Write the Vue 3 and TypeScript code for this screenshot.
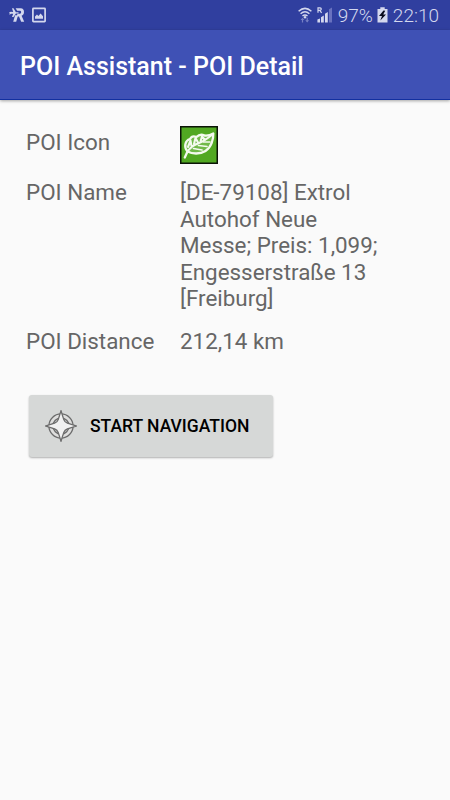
<script setup lang="ts">
interface Poi {
  name: string
  distance: string
}

const poi: Poi = {
  name: '[DE-79108] Extrol Autohof Neue Messe; Preis: 1,099; Engesserstraße 13 [Freiburg]',
  distance: '212,14 km',
}

function startNavigation(): void {
  window.dispatchEvent(new CustomEvent('start-navigation', { detail: poi }))
}
</script>

<template>
  <div class="screen">
    <div class="status-bar">
      <svg class="ic-route" width="16" height="16" viewBox="0 0 16 16">
        <path d="M6.6 1.2H11.6C14.2 1.2 15 3 15 5C15 7.1 13.9 8.4 12.6 8.8L15.2 14.8H12.2L10 9.4H8.7L7.2 14.8H4.2L6.1 8.2H8L8.5 6.8H11C12.5 6.8 12.5 3.8 11.2 3.8H8.2Z" />
        <path d="M0 5.4L1.8 4.8L4.2 5L3 1.2H4.5L6.9 5.2H9.5V6.6H6.9L4.5 10H3L4.2 6.8L1.8 6.8L.6 8V6.2Z" />
      </svg>
      <svg class="ic-image" width="14" height="16" viewBox="0 0 14 16">
        <rect x=".9" y="1.4" width="12.2" height="13.2" rx=".6" fill="none" stroke="#d4d8ee" stroke-width="1.7" />
        <path d="M3 11.8V9.4L5 7.5L6.4 9L8.6 6.6L11 9.2V11.8Z" />
      </svg>
      <div class="spacer"></div>
      <svg class="ic-wifi" width="14" height="17" viewBox="0 0 14 17">
        <g fill="none" stroke="#d4d8ee" stroke-width="1.5">
          <path d="M.6 4.2Q7-1.5 13.4 4.2" />
          <path d="M2.6 6.7Q7 2.8 11.4 6.7" />
          <path d="M4.5 9Q7 6.9 9.5 9" />
        </g>
        <circle cx="7" cy="10.3" r="1.2" />
        <g fill="#7780c5">
          <path d="M4.5 10.8L6.4 13H5.1V15.5H3.9V13H2.6Z" />
          <path d="M9.2 15.5L7.3 13.3H8.6V10.8H9.8V13.3H11.1Z" />
        </g>
      </svg>
      <svg class="ic-signal" width="16" height="16" viewBox="0 0 16 16">
        <path d="M1 5.8V.8H3Q4.3 1 4.3 2.1T3 3.3H1M2.8 3.3L4.6 5.8" fill="none" stroke="#d4d8ee" stroke-width="1.2" />
        <path d="M.4 12.4L3 11.4V15.4H.4ZM4 10.2L6.8 8.6V15.4H4ZM8 6.8L10.8 5V15.4H8Z" />
        <path d="M12 2.2L15 .4V15.4H12Z" fill="#6972bf" />
      </svg>
      <span class="battery-text">97%</span>
      <svg class="ic-battery" width="11" height="16" viewBox="0 0 11 16">
        <path d="M3.3 .3H7.7V2H10.5V15.6H.5V2H3.3Z" />
        <path d="M6.5 3.4L2 9H5L3.3 13.4L9 7.5H6.2L8.2 3.8Z" fill="#080a1c" />
      </svg>
      <span class="clock">22:10</span>
    </div>

    <header class="app-bar">
      <h1>POI Assistant - POI Detail</h1>
    </header>

    <main class="content">
      <dl class="details">
        <dt class="icon-label">POI Icon</dt>
        <dd class="icon-cell">
          <svg width="38" height="38" viewBox="0 0 38 38">
            <rect x=".75" y=".75" width="36.5" height="36.5" fill="#51a822" stroke="#0b1407" stroke-width="1.5" />
            <path d="M7.5 25.5C3.5 20 6 14 10.5 12L24.5 9.5L33 8C33 15 31 21 25.5 25C20 28.5 12 28 7.5 25.5Z" fill="#8dc76c" opacity=".55" />
            <g fill="none" stroke="#f4faef" stroke-linecap="round" stroke-linejoin="round">
              <path d="M4.8 31.5L7.5 25.5C3.5 21 5 14.5 10 13Q12 9 16.5 11Q20 7.5 24.5 9.5Q29 10 33.3 7.5C33.5 13 31.5 21 25.5 25C20 28.5 12 28 7.5 25.5" stroke-width="2.3" />
              <path d="M7.5 25.5Q12 19.5 18 17.5T33 8M8 21L10.5 14.5L11.5 20M14 18L15.5 12L18 16.5M20.5 15.5L22 10.5L25 14" stroke-width="2.1" />
              <path d="M13.5 22.5L22 24M18.5 19.5L27 20.5M23.5 16L30 16" stroke-width="1.7" />
            </g>
          </svg>
        </dd>
        <dt>POI Name</dt>
        <dd class="name-cell">{{ poi.name }}</dd>
        <dt>POI Distance</dt>
        <dd>{{ poi.distance }}</dd>
      </dl>

      <button class="nav-button" type="button" @click="startNavigation">
        <svg width="32" height="32" viewBox="0 0 32 32">
          <g fill="none">
            <circle cx="16" cy="16" r="10" stroke="#6c6c6c" stroke-width="5.4" />
            <circle cx="16" cy="16" r="10.1" stroke="#dededd" stroke-width="2.7" />
          </g>
          <path d="M16 .8L18.8 9.6Q19.7 12.3 22.4 13.2L31.2 16L22.4 18.8Q19.7 19.7 18.8 22.4L16 31.2L13.2 22.4Q12.3 19.7 9.6 18.8L.8 16L9.6 13.2Q12.3 12.3 13.2 9.6Z" fill="#f1f1f1" stroke="#6c6c6c" stroke-width="1.3" />
        </svg>
        <span>START NAVIGATION</span>
      </button>
    </main>
  </div>
</template>

<style>
body {
  margin: 0;
  background: #fafafa;
}
</style>

<style scoped>
.screen {
  width: 100%;
  height: 100vh;
  overflow: hidden;
  background: #fafafa;
  font-family: Roboto, "Noto Sans", sans-serif;
  display: flex;
  flex-direction: column;
}

.status-bar {
  flex: none;
  height: 30px;
  box-sizing: border-box;
  padding: 0 11px 0 9px;
  display: flex;
  align-items: center;
  background: #303f9f;
  color: #d4d8ee;
  font-size: 19px;
  line-height: 30px;
}

.status-bar svg {
  flex: none;
  fill: #d4d8ee;
}

.ic-image {
  margin-left: 7px;
}

.spacer {
  flex: 1;
}

.ic-signal {
  margin-left: 5px;
}

.battery-text {
  margin-left: 5px;
  padding-top: 2px;
  font-weight: 300;
}

.ic-battery {
  margin-left: 4px;
}

.clock {
  margin-left: 5px;
  padding-top: 2px;
  font-weight: 300;
}

.app-bar {
  flex: none;
  height: 70px;
  box-sizing: border-box;
  padding: 4px 20px 0;
  display: flex;
  align-items: center;
  background: #3f51b5;
  border-bottom: 1px solid #1230a0;
  box-shadow: 0 1px 3px rgba(0, 0, 0, 0.35);
}

h1 {
  margin: 0;
  color: #fff;
  font-size: 25px;
  font-weight: 500;
  line-height: 30px;
}

.content {
  padding: 26px 26px 0;
}

.details {
  margin: 0;
  display: grid;
  grid-template-columns: 154px 205px;
  row-gap: 16px;
  color: #666;
  font-size: 22.4px;
  line-height: 26.6px;
}

.details dt,
.details dd {
  margin: 0;
}

.details .icon-label {
  padding-top: 3px;
}

.icon-cell {
  height: 37px;
}

.icon-cell svg {
  display: block;
}

.nav-button {
  margin: 40px 0 0 3px;
  width: 244px;
  height: 62px;
  padding: 0 0 0 16px;
  display: flex;
  align-items: center;
  gap: 13px;
  border: 0;
  border-radius: 3px;
  background: #d6d8d7;
  box-shadow: 0 1px 2px rgba(0, 0, 0, 0.3);
  color: #000;
  font-family: inherit;
  font-size: 17.5px;
  font-weight: 500;
  white-space: nowrap;
}
</style>
